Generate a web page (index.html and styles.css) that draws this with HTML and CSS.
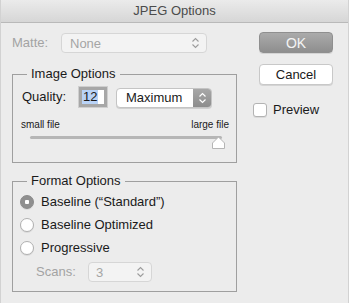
FILE: index.html
```html
<!DOCTYPE html>
<html lang="en">
<head>
  <meta charset="UTF-8">
  <title>JPEG Options</title>
  <link rel="stylesheet" href="styles.css">
</head>
<body>

<div class="window">
  <div class="titlebar">JPEG Options</div>

  <div class="content">
    <div class="main">

      <!-- MATTE -->
      <div class="matte-row">
        <span class="label dim matte-label">Matte:</span>
        <div class="select disabled matte-select">
          <span>None</span>
          <svg class="chev" width="9" height="12" viewBox="0 0 9 12"><path d="M1.5 4.5 L4.5 1.5 L7.5 4.5 M1.5 7.5 L4.5 10.5 L7.5 7.5" fill="none" stroke="#9c9c9c" stroke-width="1.1"/></svg>
        </div>
      </div>

      <!-- IMAGE OPTIONS -->
      <fieldset class="group image-group">
        <legend>Image Options</legend>
        <div class="quality-row">
          <span class="label quality-label">Quality:</span>
          <div class="num-input"><span class="selected">12</span></div>
          <div class="popup">
            <span class="popup-text">Maximum</span>
            <span class="popup-arrows">
              <svg width="9" height="12" viewBox="0 0 9 12"><path d="M1.5 4.5 L4.5 1.5 L7.5 4.5 M1.5 7.5 L4.5 10.5 L7.5 7.5" fill="none" stroke="#fff" stroke-width="1.2"/></svg>
            </span>
          </div>
        </div>
        <div class="slider-labels">
          <span>small file</span>
          <span>large file</span>
        </div>
        <div class="slider">
          <div class="track"></div>
          <svg class="thumb" width="15" height="14" viewBox="0 0 15 14"><path d="M1.5 12.5 L1.5 7 L7.5 1 L13.5 7 L13.5 12.5 Z" fill="#fff" stroke="#b5b5b5" stroke-width="1"/></svg>
        </div>
      </fieldset>

      <!-- FORMAT OPTIONS -->
      <fieldset class="group format-group">
        <legend>Format Options</legend>
        <label class="radio-row"><span class="radio on"></span>Baseline (“Standard”)</label>
        <label class="radio-row"><span class="radio"></span>Baseline Optimized</label>
        <label class="radio-row"><span class="radio"></span>Progressive</label>
        <div class="scans-row">
          <span class="label dim scans-label">Scans:</span>
          <div class="select disabled scans-select">
            <span>3</span>
            <svg class="chev" width="9" height="12" viewBox="0 0 9 12"><path d="M1.5 4.5 L4.5 1.5 L7.5 4.5 M1.5 7.5 L4.5 10.5 L7.5 7.5" fill="none" stroke="#9c9c9c" stroke-width="1.1"/></svg>
          </div>
        </div>
      </fieldset>

    </div>

    <div class="side">
      <button class="btn btn-default">OK</button>
      <button class="btn">Cancel</button>
      <label class="check-row"><span class="checkbox"></span>Preview</label>
    </div>
  </div>
</div>

</body>
</html>
```

FILE: styles.css
```css
body {
  margin: 0;
  font-family: "Liberation Sans", Arial, sans-serif;
  font-size: 13px;
  color: #1a1a1a;
  background: #ececec;
}
.window {
  width: 349px;
  height: 303px;
  box-sizing: border-box;
  background: #ececec;
  border-left: 1px solid #d2d2d2;
  border-right: 1px solid #d2d2d2;
  overflow: hidden;
}
.titlebar {
  height: 22px;
  line-height: 22px;
  text-align: center;
  color: #4b4b4b;
  font-size: 13px;
  background: linear-gradient(#ebebeb, #d6d6d6);
  border-bottom: 1px solid #b9b9b9;
}
.content {
  display: flex;
}
.main {
  padding: 10px 0 0 11px;
  width: 225px;
}
.label {
  line-height: 20px;
}
.dim {
  color: #a3a3a3;
}
.matte-row,
.quality-row,
.scans-row {
  display: flex;
  align-items: center;
  height: 20px;
}
.matte-label {
  width: 49px;
}
.select {
  box-sizing: border-box;
  height: 20px;
  display: flex;
  align-items: center;
  justify-content: space-between;
  padding: 0 6px 0 8px;
  border-radius: 4px;
}
.select.disabled {
  background: #f3f3f3;
  border: 1px solid #d6d6d6;
  color: #a5a5a5;
}
.matte-select {
  width: 146px;
}
.group {
  margin: 13px 0 0;
  padding: 5px 7px 12px 9px;
  border: 1px solid #9f9f9f;
  width: 225px;
  box-sizing: border-box;
}
.group legend {
  margin-left: 5px;
  padding: 0 4px;
  line-height: 16px;
  font-size: 13px;
  color: #1a1a1a;
}
.quality-label {
  width: 57px;
}
.num-input {
  box-sizing: border-box;
  width: 28px;
  height: 20px;
  background: #fff;
  border: 3px solid #a7a7a7;
  outline: 1px solid #cfcfcf;
  padding-left: 0;
  display: flex;
  align-items: center;
}
.selected {
  background: #b9d3f7;
  line-height: 14px;
  padding: 0 1px;
  font-size: 13px;
}
.popup {
  box-sizing: border-box;
  margin-left: 9px;
  margin-top: 2px;
  width: 96px;
  height: 20px;
  display: flex;
  border: 1px solid #c4c4c4;
  border-radius: 4px;
  background: #fff;
  box-shadow: 0 1px 0 #d0d0d0;
  overflow: hidden;
}
.popup-text {
  flex: 1;
  padding-left: 9px;
  line-height: 18px;
}
.popup-arrows {
  width: 18px;
  display: flex;
  align-items: center;
  justify-content: center;
  background: linear-gradient(#a8a8a8, #8d8d8d);
}
.popup-arrows svg,
.chev {
  display: block;
}
.slider-labels {
  display: flex;
  justify-content: space-between;
  margin: 12px 0 0 -1px;
  font-size: 10px;
  line-height: 12px;
}
.slider {
  position: relative;
  height: 14px;
  margin-top: 5px;
}
.track {
  margin: 5px 7px 0 8px;
  height: 3px;
  border-radius: 2px;
  background: #b6b6b6;
}
.thumb {
  position: absolute;
  left: 189px;
  top: 0;
}
.format-group {
  margin-top: 10px;
  padding: 1px 7px 9px 7px;
}
.format-group legend {
  margin-left: 7px;
}
.radio-row {
  display: flex;
  align-items: center;
  height: 23px;
  gap: 7px;
}
.radio {
  box-sizing: border-box;
  width: 14px;
  height: 14px;
  border-radius: 50%;
  background: #fff;
  border: 1px solid #b0b0b0;
  box-shadow: 0 1px 0 #dadada;
}
.radio.on {
  background: radial-gradient(circle, #fff 0 2px, #8f8f8f 2.5px);
  border-color: #888;
}
.scans-row {
  margin-top: 3px;
  padding-left: 16px;
}
.scans-label {
  width: 52px;
}
.scans-select {
  width: 64px;
  padding-left: 7px;
}
.side {
  margin-left: 16px;
  padding-top: 9px;
  display: flex;
  flex-direction: column;
  align-items: flex-start;
}
.btn {
  box-sizing: border-box;
  margin-left: 6px;
  width: 74px;
  height: 21px;
  border-radius: 4px;
  font-family: inherit;
  font-size: 13px;
  padding: 0;
  background: #fff;
  color: #1a1a1a;
  border: 1px solid #c8c8c8;
  box-shadow: 0 1px 0 #d4d4d4;
}
.btn-default {
  background: linear-gradient(#ababab, #8e8e8e);
  border: 1px solid #8f8f8f;
  color: #f4f4f4;
  font-size: 14px;
}
.btn + .btn {
  margin-top: 11px;
}
.check-row {
  display: flex;
  align-items: center;
  gap: 6px;
  margin-top: 17px;
  line-height: 16px;
}
.checkbox {
  box-sizing: border-box;
  width: 14px;
  height: 14px;
  background: #fff;
  border: 1px solid #b3b3b3;
  border-radius: 3px;
  box-shadow: 0 1px 0 #dadada;
}
```
